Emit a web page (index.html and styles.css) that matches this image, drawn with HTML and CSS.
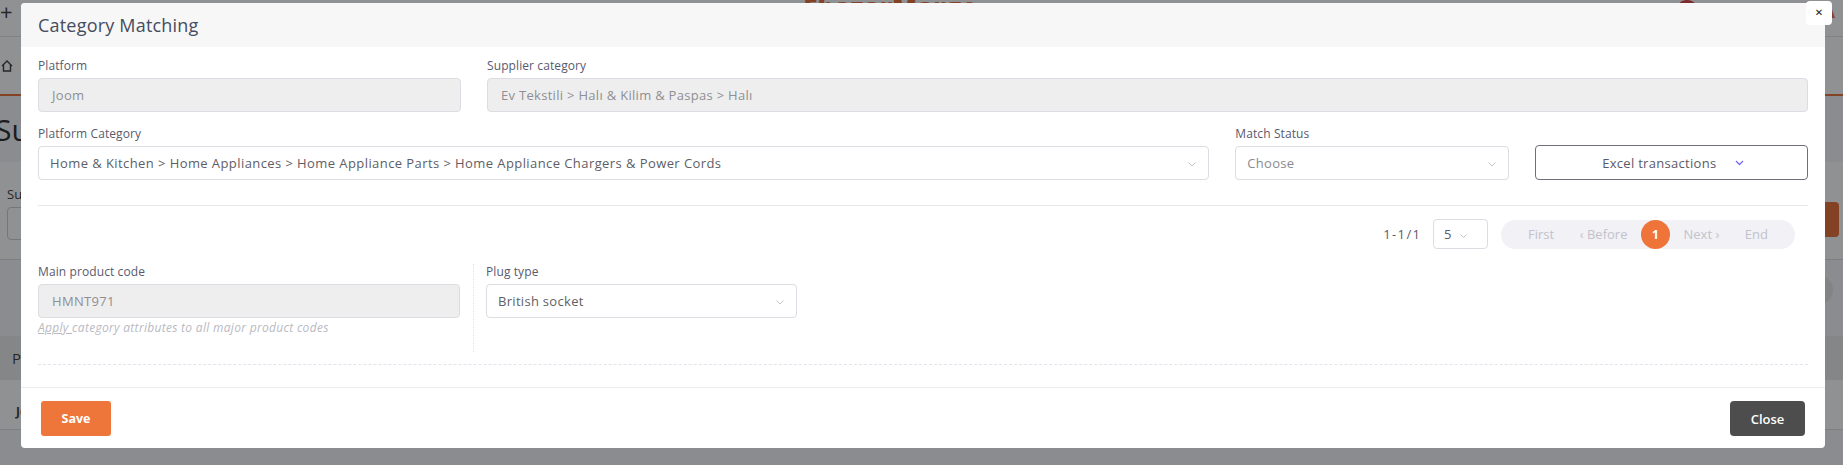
FILE: index.html
```html
<!DOCTYPE html>
<html lang="en">
<head>
<meta charset="utf-8">
<title>Category Matching</title>
<link rel="stylesheet" href="styles.css">
</head>
<body>
<div class="page">
  <header class="topbar">
    <div class="tb-left">
      <span class="tb-plus">+</span>
      <span class="tb-ico"></span><span class="tb-ico"></span><span class="tb-ico"></span>
    </div>
    <div class="tb-logo">EbazarMarge</div>
    <div class="tb-user"><span class="tb-avatar"></span><span class="tb-name">Ali Aydemir</span><span class="tb-lang">A</span></div>
  </header>
  <div class="crumbbar">
    <svg class="home-ico" width="14" height="14" viewBox="0 0 14 14"><path d="M2 7 L7 2 L12 7 M3.5 6 V12 H10.5 V6" fill="none" stroke="#333" stroke-width="1.4"/></svg>
    <span>Home</span>
  </div>
  <h1 class="page-title">Supplier Category Matching</h1>
  <section class="filter-card">
    <div class="filter-field">
      <span class="filter-label">Supplier</span>
      <div class="filter-input"></div>
    </div>
    <div class="filter-side">
      <button class="filter-btn">Search</button>
      <span class="round"></span>
    </div>
  </section>
  <section class="table-card">
    <div class="thead"><span>Platform</span></div>
    <div class="trow"><span>Joom</span></div>
  </section>
</div>

<div class="backdrop"></div>

<div class="modal">
  <button class="modal-x" type="button">&#x2715;</button>
  <div class="modal-header">
    <h2 class="modal-title">Category Matching</h2>
  </div>
  <div class="modal-body">
    <div class="form-grid">
      <div class="field span3">
        <label class="lbl">Platform</label>
        <div class="input disabled">Joom</div>
      </div>
      <div class="field span9">
        <label class="lbl">Supplier category</label>
        <div class="input disabled">Ev Tekstili &gt; Halı &amp; Kilim &amp; Paspas &gt; Halı</div>
      </div>
      <div class="field span8">
        <label class="lbl">Platform Category</label>
        <div class="input select">
          <span>Home &amp; Kitchen &gt; Home Appliances &gt; Home Appliance Parts &gt; Home Appliance Chargers &amp; Power Cords</span>
          <svg class="chev" width="8" height="5" viewBox="0 0 8 5"><path d="M0.5 0.5 L4 4 L7.5 0.5" fill="none" stroke="#c3c3cc" stroke-width="1"/></svg>
        </div>
      </div>
      <div class="field span2">
        <label class="lbl">Match Status</label>
        <div class="input select placeholder">
          <span>Choose</span>
          <svg class="chev" width="8" height="5" viewBox="0 0 8 5"><path d="M0.5 0.5 L4 4 L7.5 0.5" fill="none" stroke="#c3c3cc" stroke-width="1"/></svg>
        </div>
      </div>
      <div class="field span2 bottom">
        <button class="excel-btn" type="button">
          <span>Excel transactions</span>
          <svg width="9" height="6" viewBox="0 0 9 6"><path d="M1 1 L4.5 4.5 L8 1" fill="none" stroke="#7a6cf0" stroke-width="1.3"/></svg>
        </button>
      </div>
    </div>

    <hr class="sep">

    <div class="pager-row">
      <span class="pager-count">1 - 1 / 1</span>
      <div class="per-page">
        <span>5</span>
        <svg width="7" height="5" viewBox="0 0 7 5"><path d="M0.5 0.5 L3.5 3.5 L6.5 0.5" fill="none" stroke="#c3c3cc" stroke-width="1"/></svg>
      </div>
      <nav class="pager">
        <span class="pg">First</span>
        <span class="pg">&#x2039; Before</span>
        <span class="pg-current">1</span>
        <span class="pg">Next &#x203A;</span>
        <span class="pg">End</span>
      </nav>
    </div>

    <div class="attr-row">
      <div class="attr-main">
        <label class="lbl">Main product code</label>
        <div class="input disabled">HMNT971</div>
        <p class="help"><span class="help-link">Apply </span>category attributes to all major product codes</p>
      </div>
      <div class="attr-col">
        <label class="lbl">Plug type</label>
        <div class="input select dark">
          <span>British socket</span>
          <svg class="chev" width="8" height="5" viewBox="0 0 8 5"><path d="M0.5 0.5 L4 4 L7.5 0.5" fill="none" stroke="#c3c3cc" stroke-width="1"/></svg>
        </div>
      </div>
    </div>
    <div class="dashed"></div>
  </div>
  <div class="modal-footer">
    <button class="btn-save" type="button">Save</button>
    <button class="btn-close" type="button">Close</button>
  </div>
</div>
</body>
</html>
```

FILE: styles.css
```css
* { box-sizing: border-box; }

html, body {
  margin: 0;
  padding: 0;
}

body {
  width: 1843px;
  height: 465px;
  overflow: hidden;
  background: #f5f6f8;
  font-family: "Open Sans", "Liberation Sans", sans-serif;
  position: relative;
}

/* ---------- underlying page ---------- */
.page {
  display: flex;
  flex-direction: column;
}

.topbar {
  height: 37px;
  background: #fff;
  border-bottom: 1px solid #e3e3e3;
  display: flex;
  align-items: center;
  justify-content: space-between;
  padding: 0 8px 0 0;
}

.tb-left { display: flex; align-items: center; gap: 12px; }
.tb-plus { font-size: 22px; color: #333; line-height: 1; margin-top: -14px; }
.tb-ico { width: 12px; height: 12px; border: 2px solid #444; border-radius: 2px; margin-top: -18px; }

.tb-logo {
  font-weight: 800;
  font-size: 26px;
  color: #e8692b;
  margin-top: -22px;
  margin-left: 20px;
}

.tb-user { display: flex; align-items: center; gap: 20px; margin-top: -14px; }
.tb-avatar { width: 22px; height: 22px; border-radius: 50%; background: #e03a3a; }
.tb-name { font-size: 16px; color: #333; }
.tb-lang { font-size: 18px; color: #e8692b; font-weight: 700; }

.crumbbar {
  height: 59px;
  background: #fff;
  border-bottom: 2px solid #e8692b;
  display: flex;
  align-items: center;
  gap: 6px;
  font-size: 14px;
  color: #333;
}

.page-title {
  margin: 14px 0 0 -5px;
  font-size: 30px;
  font-weight: 400;
  color: #222;
  line-height: 40px;
}

.filter-card {
  margin: 12px 0 0;
  background: #fff;
  height: 98px;
  padding: 20px 4px 0 7px;
  display: flex;
  justify-content: space-between;
  border-bottom: 1px solid #ddd;
}

.filter-label { font-size: 13px; color: #333; }
.filter-input { width: 200px; height: 33px; border: 1px solid #ccc; border-radius: 4px; margin-top: 3px; }

.filter-side {
  display: flex;
  flex-direction: column;
  align-items: flex-end;
  gap: 38px;
}

.filter-btn {
  flex: none;
  width: 90px; height: 35px; background: #e8692b; border: 0; border-radius: 4px;
  color: #fff; margin-top: 20px;
}

.round {
  flex: none;
  width: 30px; height: 30px; border-radius: 50%; background: #e4e4e4; margin-right: 6px;
}

.table-card {
  margin-top: 76px;
  background: #fff;
}

.thead {
  height: 44px;
  background: #eaeaea;
  display: flex;
  align-items: center;
  padding: 0 8px 0 12px;
  font-size: 15px;
  color: #333;
}

.trow {
  height: 50px;
  display: flex;
  align-items: center;
  padding: 14px 0 0 16px;
  font-size: 12px;
  font-weight: 700;
  color: #333;
  border-bottom: 1px solid #ddd;
}

/* ---------- overlay ---------- */
.backdrop {
  position: fixed;
  inset: 0;
  background: rgba(22, 26, 30, 0.48);
}

/* ---------- modal ---------- */
.modal {
  position: absolute;
  top: 3px;
  left: 21px;
  width: 1804px;
  background: #fff;
  border-radius: 4px;
  color: #5c5c6c;
}

.modal-x {
  position: absolute;
  top: -2px;
  right: -7px;
  width: 26px;
  height: 24px;
  border: 0;
  background: #fff;
  border-radius: 4px;
  font-size: 10px;
  color: #222;
  padding: 0;
  line-height: 24px;
  font-family: "DejaVu Sans", sans-serif;
}

.modal-header {
  height: 44px;
  background: #f7f7f7;
  border-radius: 4px 4px 0 0;
  display: flex;
  align-items: center;
  padding: 0 17px;
}

.modal-title {
  margin: 0;
  font-size: 18px;
  font-weight: 400;
  letter-spacing: 0.2px;
  color: #464c5e;
}

.modal-body {
  padding: 11px 17px 22px;
}

.form-grid {
  display: grid;
  grid-template-columns: repeat(12, 1fr);
  column-gap: 26px;
  row-gap: 14px;
}

.span2 { grid-column: span 2; }
.span3 { grid-column: span 3; }
.span8 { grid-column: span 8; }
.span9 { grid-column: span 9; }

.field {
  display: flex;
  flex-direction: column;
}

.field.bottom { justify-content: flex-end; }

.lbl {
  display: block;
  font-size: 12px;
  font-weight: 500;
  line-height: 16px;
  letter-spacing: 0.1px;
  color: #595a6e;
  margin-bottom: 4px;
}

.input {
  height: 34px;
  border: 1px solid #dcdce3;
  border-radius: 4px;
  background: #fff;
  display: flex;
  align-items: center;
  padding: 0 12px;
  font-size: 13px;
  letter-spacing: 0.3px;
  color: #5e5e66;
  white-space: nowrap;
  overflow: hidden;
}

.input.disabled {
  background: #eeeeee;
  color: #8e8e94;
  padding-left: 13px;
}

.input.select {
  justify-content: space-between;
  padding-left: 11px;
  padding-right: 12px;
  letter-spacing: 0.42px;
}

.input.placeholder { color: #8a8a90; letter-spacing: 0.3px; }
.input.dark { color: #5f5f66; letter-spacing: 0.3px; }

.chev { flex: none; margin-top: 2px; }

.excel-btn {
  height: 35px;
  width: 100%;
  border: 1px solid #6f6f7c;
  border-radius: 4px;
  background: #fff;
  font-family: inherit;
  font-size: 13px;
  letter-spacing: 0.3px;
  color: #5a5a68;
  display: flex;
  align-items: center;
  justify-content: center;
  gap: 19px;
  padding: 0 0 0 4px;
}

.sep {
  margin: 25px 0 0;
  border: 0;
  border-top: 1px solid #e8e8ec;
  height: 0;
}

.pager-row {
  margin-top: 13px;
  height: 30px;
  display: flex;
  align-items: center;
  justify-content: flex-end;
  padding-right: 13px;
}

.pager-count {
  font-size: 13px;
  color: #5b5b66;
  margin-right: 13px;
  word-spacing: -2px;
}

.per-page {
  width: 55px;
  height: 30px;
  border: 1px solid #dcdce3;
  border-radius: 4px;
  display: flex;
  align-items: center;
  gap: 9px;
  padding-left: 10px;
  font-size: 13px;
  color: #5b5b66;
  margin-right: 13px;
}

.per-page svg { margin-top: 4px; }

.pager {
  width: 294px;
  height: 29px;
  background: #f1f1f6;
  border-radius: 15px;
  display: flex;
  align-items: center;
  justify-content: space-between;
  padding: 0 15px;
}

.pg {
  font-size: 13px;
  color: #c2c2cc;
  padding: 0 12px;
}

.pg-current {
  width: 29px;
  height: 29px;
  border-radius: 50%;
  background: #ef743a;
  color: #fff;
  font-size: 12px;
  font-weight: 700;
  display: flex;
  align-items: center;
  justify-content: center;
}

.attr-row {
  margin-top: 15px;
  display: flex;
}

.attr-main {
  width: 436px;
  padding-right: 13px;
  padding-bottom: 16px;
  border-right: 1px dotted #e2e2ea;
}

.attr-col {
  width: 323px;
  padding-left: 12px;
}

.help {
  margin: 2px 0 0;
  font-size: 12px;
  line-height: 16px;
  letter-spacing: 0.3px;
  font-style: italic;
  color: #b9b9c2;
}

.help-link { text-decoration: underline; }

.dashed {
  margin-top: 12px;
  border-top: 1px dashed #e3e3ee;
}

.modal-footer {
  border-top: 1px solid #ececec;
  padding: 13px 20px 12px;
  display: flex;
  justify-content: space-between;
}

.btn-save {
  width: 70px;
  height: 35px;
  border: 0;
  border-radius: 3px;
  background: #ef763b;
  color: #fff;
  font-family: inherit;
  font-size: 12.5px;
  font-weight: 700;
}

.btn-close {
  width: 75px;
  height: 35px;
  border: 0;
  border-radius: 4px;
  background: #4d4d4d;
  color: #fff;
  font-family: inherit;
  font-size: 13px;
  font-weight: 600;
}
```
